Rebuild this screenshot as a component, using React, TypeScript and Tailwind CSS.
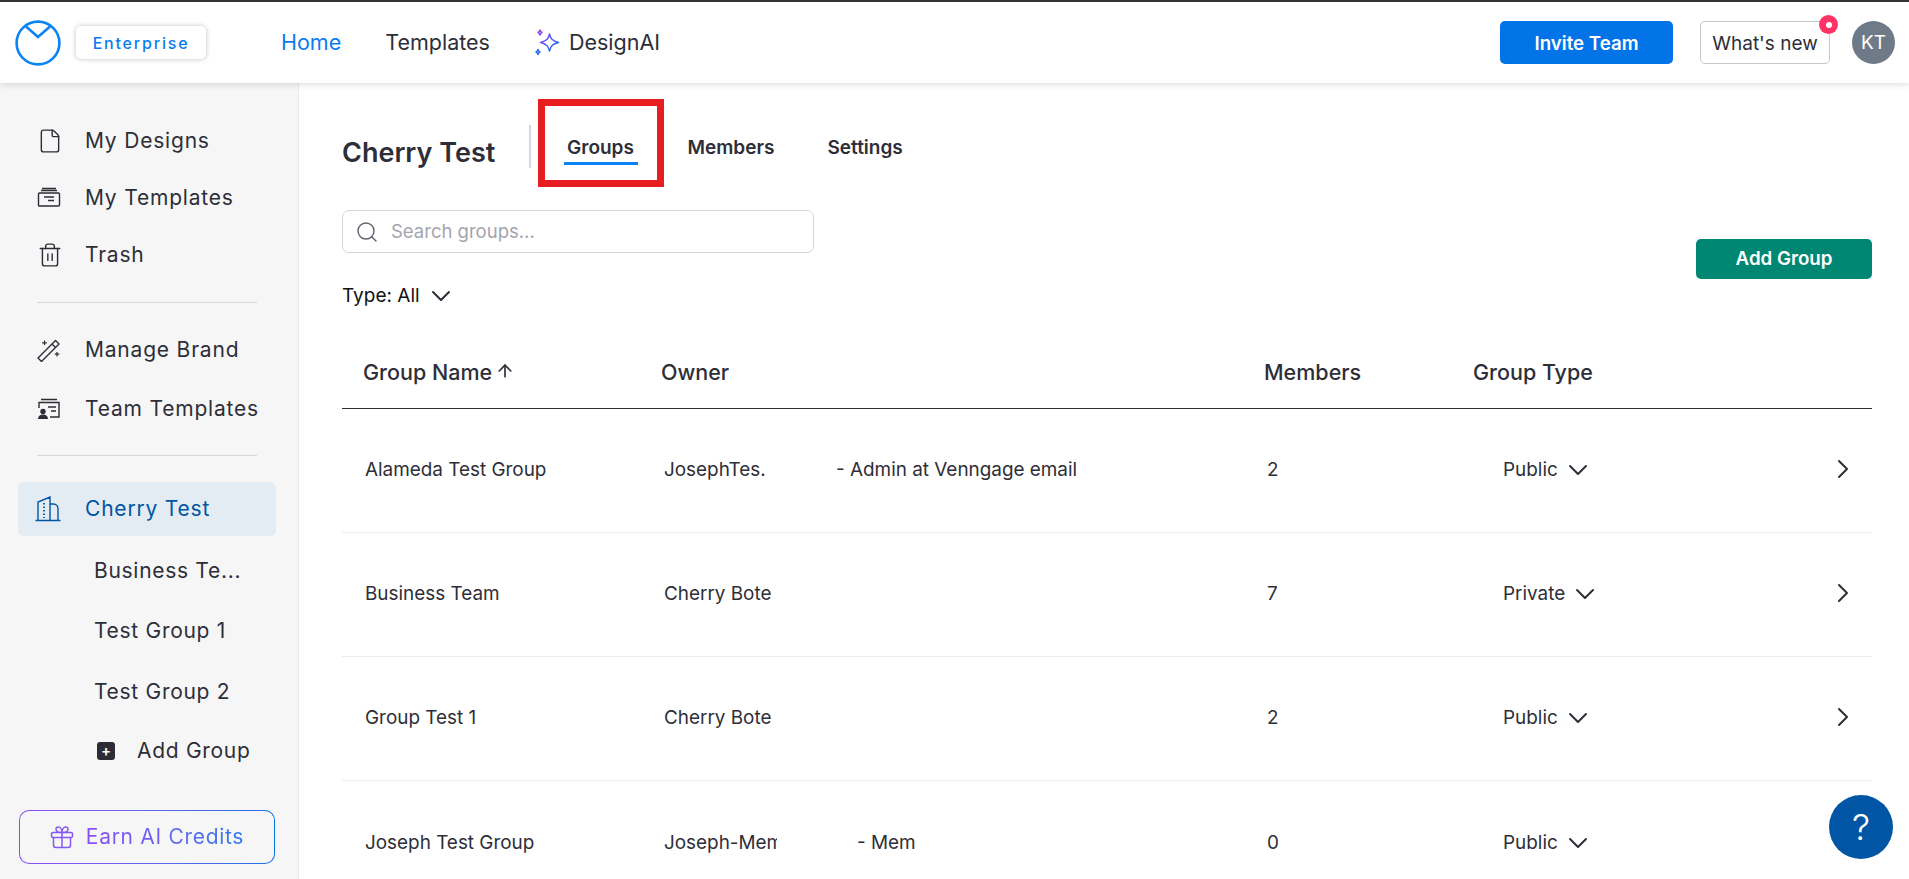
import React from "react";
import { ChevronDown, ChevronRight, File, Search, Trash2, ArrowUp } from "lucide-react";

const font = { fontFamily: "Inter, 'Noto Sans', sans-serif" };

const Logo = () => (
  <svg width="46" height="46" viewBox="0 0 46 46" fill="none" stroke="#0a84f5" strokeWidth="2.6">
    <circle cx="23" cy="23" r="21.4" />
    <path d="M11 6.500 23 17 35 6.500" strokeLinejoin="miter" />
  </svg>
);

const Sparkle = () => (
  <svg width="26" height="28" viewBox="0 0 26 28" fill="none" strokeWidth="1.5" strokeLinejoin="round">
    <defs>
      <linearGradient id="spark" x1="0" y1="0" x2="1" y2="1">
        <stop offset="0" stopColor="#8b4cf6" />
        <stop offset="1" stopColor="#0a74ea" />
      </linearGradient>
    </defs>
    <path d="M15.500 5c1.100 5 3 7 9 8.500-6 1.500-7.900 3.500-9 8.500-1.100-5-3-7-9-8.500 6-1.500 7.900-3.500 9-8.500Z" stroke="url(#spark)" />
    <path d="M6 1c.3 1.400.8 1.900 2 2.500-1.200.6-1.700 1.100-2 2.500-.3-1.400-.8-1.900-2-2.500 1.200-.6 1.700-1.100 2-2.500Z" stroke="#8b4cf6" />
    <path d="M4 20.500c.3 1.400.8 1.900 2 2.500-1.200.6-1.700 1.100-2 2.500-.3-1.400-.8-1.900-2-2.500 1.200-.6 1.700-1.100 2-2.500Z" stroke="#2f6fee" />
  </svg>
);

const TemplatesIcon = () => (
  <svg width="24" height="24" viewBox="0 0 24 24" fill="none" stroke="#2c2c36" strokeWidth="1.4">
    <rect x="1.500" y="7" width="21" height="13" rx="1" />
    <path d="M4 4.500h16M5 2.500h14M7 11h10M11 14.500h6" />
  </svg>
);

const WandIcon = () => (
  <svg width="24" height="24" viewBox="0 0 24 24" fill="none" stroke="#2c2c36" strokeWidth="1.4" strokeLinejoin="round">
    <path d="M1 20 18.500 2.500l3.500 3.500L4.500 23.500 1 20ZM15 6l3.500 3.500" />
    <path d="M7.500 2.500v4.500M5.200 4.800h4.600M20 14v4.500M17.700 16.200h4.600" strokeWidth="1.2" />
  </svg>
);

const TeamIcon = () => (
  <svg width="24" height="24" viewBox="0 0 24 24" fill="none" stroke="#2c2c36" strokeWidth="1.4">
    <path d="M4 2.500h16M2 11V5.500h20V20H13" />
    <path d="M11 10h8M14 14h5" />
    <circle cx="6" cy="14.500" r="2.700" fill="#2c2c36" stroke="none" />
    <path d="M1 22c0-3 2-4.500 5-4.500s5 1.500 5 4.500H1Z" fill="#2c2c36" stroke="none" />
  </svg>
);

const BuildingIcon = () => (
  <svg width="26" height="26" viewBox="0 0 26 26" fill="none" stroke="#0056a4" strokeWidth="1.4">
    <path d="M0.500 24.500h25M3 24.500V6L15 1v23.500M15 8h3.500a4.500 4.500 0 0 1 4.500 4.500v12M15 8v16.500" />
    <path d="M9 7v15" strokeDasharray="1.500 2" strokeWidth="1.800" />
  </svg>
);

const GiftIcon = () => (
  <svg width="24" height="24" viewBox="0 0 24 24" fill="none" stroke="#8558f2" strokeWidth="1.500">
    <rect x="1.500" y="7.500" width="21" height="5" rx="1.500" />
    <path d="M3.500 12.500V20a2.500 2.500 0 0 0 2.500 2.500h12a2.500 2.500 0 0 0 2.500-2.500v-7.500M12 7.500v15" />
    <path d="M12 7.500C8 7.500 6 6 6 4.200 6 2.800 7 2 8.200 2 10.500 2 12 4.500 12 7.500Zm0 0c4 0 6-1.500 6-3.300C18 2.800 17 2 15.800 2 13.500 2 12 4.500 12 7.500Z" />
  </svg>
);

const SideItem = ({ icon, label }: { icon: React.ReactNode; label: string }) => (
  <div className="flex h-[54px] items-center">
    <div className="flex w-[48px] justify-start">{icon}</div>
    <span className="text-[21px] tracking-[0.8px] text-[#2e2e38]">{label}</span>
  </div>
);

const SubItem = ({ label }: { label: string }) => (
  <div className="flex h-[60.5px] items-center pl-[94px] text-[21px] tracking-[0.7px] text-[#2e2e38]">{label}</div>
);

const Sidebar = () => (
  <aside className="flex w-[299px] shrink-0 flex-col border-r border-[#e8e8e8] bg-[#f6f6f7] pt-[31px]">
    <div className="flex flex-col gap-[3px] px-[37px]">
      <SideItem icon={<File size={26} strokeWidth={1.3} color="#2c2c36" />} label="My Designs" />
      <SideItem icon={<TemplatesIcon />} label="My Templates" />
      <SideItem icon={<Trash2 size={26} strokeWidth={1.3} color="#2c2c36" />} label="Trash" />
    </div>
    <div className="mx-[37px] mt-[20px] h-px w-[220px] bg-[#d8d8dc]" />
    <div className="mt-[20px] flex flex-col gap-[5px] px-[37px]">
      <SideItem icon={<WandIcon />} label="Manage Brand" />
      <SideItem icon={<TeamIcon />} label="Team Templates" />
    </div>
    <div className="mx-[37px] mt-[19px] h-px w-[220px] bg-[#d8d8dc]" />
    <div className="mx-[18px] mt-[26px] flex h-[54px] w-[258px] items-center rounded-[6px] bg-[#e3ebf3] pl-[17px]">
      <div className="w-[50px]">
        <BuildingIcon />
      </div>
      <span className="text-[21px] tracking-[0.8px] text-[#0056a4]">Cherry Test</span>
    </div>
    <div className="mt-[4px]">
      <SubItem label="Business Te..." />
      <SubItem label="Test Group 1" />
      <SubItem label="Test Group 2" />
    </div>
    <div className="flex h-[58px] items-center pl-[97px]">
      <div className="flex h-[18px] w-[18px] items-center justify-center rounded-[3px] bg-[#2c2c36] text-[15px] leading-none font-semibold text-white">+</div>
      <span className="ml-[22px] text-[21px] tracking-[0.7px] text-[#2e2e38]">Add Group</span>
    </div>
    <div className="mx-[19px] mt-[30.5px] h-[54px] w-[256px] rounded-[10px] bg-gradient-to-r from-[#8b4cf6] to-[#0274e8] p-px">
      <div className="flex h-full items-center justify-center gap-[12px] rounded-[9px] bg-[#f6f6f7]">
        <GiftIcon />
        <span className="bg-gradient-to-r from-[#8b4cf6] to-[#2478ec] bg-clip-text text-[21px] tracking-[0.7px] text-transparent">Earn AI Credits</span>
      </div>
    </div>
  </aside>
);

const rows = [
  { name: "Alameda Test Group", owner: "JosephTes.", role: "- Admin at Venngage email", roleGap: "pl-[59px]", members: "2", type: "Public" },
  { name: "Business Team", owner: "Cherry Bote", role: "", roleGap: "", members: "7", type: "Private" },
  { name: "Group Test 1", owner: "Cherry Bote", role: "", roleGap: "", members: "2", type: "Public" },
  { name: "Joseph Test Group", owner: "Joseph-Mem", role: "- Mem", roleGap: "pl-[80px]", members: "0", type: "Public" },
];

const Row = ({ row, last }: { row: (typeof rows)[number]; last: boolean }) => (
  <div className={`grid h-[124px] shrink-0 grid-cols-[322px_602px_236px_1fr_40px] items-center text-[18.9px] text-[#2e2e38] ${last ? "" : "border-b border-[#ececee]"}`}>
    <div className="pl-[23px]">{row.name}</div>
    <div className="flex items-center">
      <span className="w-[113px] overflow-hidden whitespace-nowrap">{row.owner}</span>
      <span className={row.roleGap}>{row.role}</span>
    </div>
    <div className="pl-[1px]">{row.members}</div>
    <div className="flex items-center gap-[4px] pl-[1px]">
      {row.type}
      <ChevronDown size={32} strokeWidth={1.5} className="-my-[6px]" />
    </div>
    <div>
      <ChevronRight size={32} strokeWidth={1.5} className="-mb-[6px] -ml-[5px] -mt-[10px]" />
    </div>
  </div>
);

const Main = () => (
  <main className="relative min-w-0 flex-1 overflow-hidden bg-white pt-[15px] pr-[37px] pl-[43px]">
    <div className="flex h-[90px] items-center">
      <h1 className="w-[187px] pt-[20px] text-[27px] font-semibold text-[#2e2e38]">Cherry Test</h1>
      <div className="mt-[6px] h-[43px] w-[1.500px] bg-[#d8d8dc]" />
      <div className="ml-[7px] flex h-[88px] w-[126px] flex-col items-center justify-center border-[7px] border-[#e71d20] pt-[15px]">
        <span className="text-[19px] leading-[24px] font-semibold text-[#2e2e38]">Groups</span>
        <span className="mt-[2px] h-[3px] w-[74px] bg-[#0a84f5]" />
      </div>
      <span className="ml-[24px] pt-[10px] text-[19px] font-semibold text-[#2e2e38]">Members</span>
      <span className="ml-[53px] pt-[10px] text-[19px] font-semibold text-[#2e2e38]">Settings</span>
    </div>

    <div className="flex justify-between">
      <div>
        <div className="mt-[22px] flex h-[43px] w-[472px] items-center gap-[12px] rounded-[7px] border border-[#d4d5da] pl-[12px]">
          <Search size={24} strokeWidth={1.400} color="#5f6470" />
          <span className="text-[18.500px] text-[#a3a5ae]">Search groups...</span>
        </div>
        <div className="mt-[32px] flex h-[22px] items-center gap-[5px] text-[19px] text-[#111]">
          Type: All
          <ChevronDown size={32} strokeWidth={1.5} color="#2e2e38" />
        </div>
      </div>
      <button className="mt-[51px] h-[40px] w-[176px] rounded-[5px] bg-[#008774] text-[18.700px] font-semibold text-white">Add Group</button>
    </div>

    <div className="mt-[36px] grid h-[66px] grid-cols-[319px_603px_209px_1fr] items-center border-b border-[#2e2e38] pb-[7px] text-[21.500px] font-medium text-[#2e2e38]">
      <div className="flex items-center gap-[3px] pl-[21px]">
        Group Name
        <ArrowUp size={20} strokeWidth={2} className="-mt-[3px]" />
      </div>
      <div>Owner</div>
      <div>Members</div>
      <div>Group Type</div>
    </div>
    {rows.map((row, i) => (
      <Row key={row.name} row={row} last={i === rows.length - 1} />
    ))}
    <button className="absolute top-[712px] right-[16px] flex h-[64px] w-[64px] items-center justify-center rounded-full bg-[#0056a4] text-[36px] font-light text-white">?</button>
  </main>
);

export default function App() {
  return (
    <div className="flex h-[879px] flex-col overflow-hidden bg-white" style={font}>
      <header className="relative z-10 flex h-[83px] shrink-0 items-center border-t-2 border-[#333] bg-white pr-[14px] pl-[15px] shadow-[0_2px_6px_rgba(0,0,0,0.12)]">
        <Logo />
        <div className="ml-[15px] flex h-[33px] w-[130px] items-center justify-center rounded-[5px] bg-white text-[16px] font-medium tracking-[1.800px] text-[#0a7cf0] shadow-[0_0_5px_rgba(0,0,0,0.25)]">Enterprise</div>
        <nav className="ml-[75px] flex items-center text-[21.500px]">
          <span className="text-[#0a7cf0]">Home</span>
          <span className="ml-[44px] text-[#2e2e38]">Templates</span>
          <span className="ml-[44px] flex items-center gap-[9px] text-[#2e2e38]">
            <Sparkle />
            DesignAI
          </span>
        </nav>
        <button className="ml-auto h-[43px] w-[173px] rounded-[5px] bg-[#0274e8] pt-[3px] text-[18.700px] font-semibold text-white">Invite Team</button>
        <div className="relative ml-[27px] flex h-[43px] w-[130px] items-center justify-center rounded-[5px] border border-[#c8c8cc] pt-[3px] text-[19px] text-[#2e2e38]">
          What's new
          <span className="absolute -top-[7px] -right-[9px] flex h-[19px] w-[19px] items-center justify-center rounded-full bg-[#ff3366]">
            <span className="h-[6px] w-[6px] rounded-full bg-white" />
          </span>
        </div>
        <div className="ml-[22px] flex h-[43px] w-[43px] items-center justify-center rounded-full bg-[#6f7a89] pt-[1px] text-[19px] text-white">KT</div>
      </header>
      <div className="flex min-h-0 flex-1">
        <Sidebar />
        <Main />
      </div>
    </div>
  );
}
